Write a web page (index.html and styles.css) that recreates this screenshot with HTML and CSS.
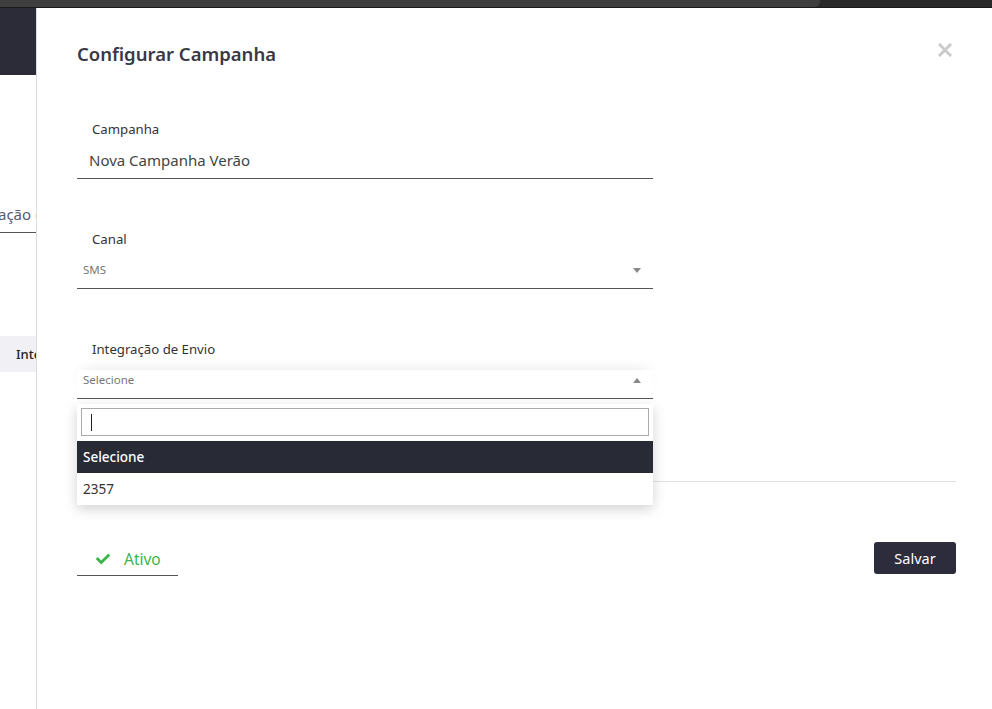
FILE: index.html
```html
<!DOCTYPE html>
<html lang="pt">
<head>
<meta charset="utf-8">
<title>Configurar Campanha</title>
<link rel="stylesheet" href="styles.css">
</head>
<body>
<div class="topbar"><div class="topbar-tab"></div></div>
<div class="main">
  <aside class="sidebar">
    <div class="sidebar-head"></div>
    <div class="sidebar-input">ação de envio</div>
    <div class="sidebar-item">Integrações</div>
  </aside>
  <section class="modal">
    <h1 class="modal-title">Configurar Campanha</h1>
    <svg class="close" viewBox="0 0 14 14" width="14" height="14"><path d="M2 2L12 12M12 2L2 12" stroke="#cbcbcb" stroke-width="3" stroke-linecap="square"/></svg>
    <div class="form">
      <div class="field">
        <div class="field-label">Campanha</div>
        <div class="field-value text-value">Nova Campanha Verão</div>
      </div>
      <div class="field">
        <div class="field-label">Canal</div>
        <div class="field-value select-value"><span>SMS</span><span class="caret down"></span></div>
      </div>
      <div class="field field-open">
        <div class="field-label">Integração de Envio</div>
        <div class="field-value select-value focused"><span>Selecione</span><span class="caret up"></span></div>
        <div class="dropdown">
          <div class="search"><span class="cursor"></span></div>
          <div class="option active">Selecione</div>
          <div class="option">2357</div>
        </div>
      </div>
    </div>
    <hr class="separator">
    <div class="footer">
      <div class="status">
        <svg class="check" viewBox="0 0 512 512" width="16" height="14"><path fill="#3bb54a" d="M173.9 439.4L7.5 273c-10-10-10-26.2 0-36.2l36.2-36.2c10-10 26.2-10 36.200 0L192 312.7 432.1 72.6c10-10 26.2-10 36.2 0l36.2 36.2c10 10 10 26.2 0 36.2L210.1 439.4c-10 10-26.2 10-36.2 0z"/></svg>
        <span>Ativo</span>
      </div>
      <button class="save">Salvar</button>
    </div>
  </section>
</div>
</body>
</html>
```

FILE: styles.css
```css
* { box-sizing: border-box; }
html, body { margin: 0; padding: 0; height: 100%; }
body {
  font-family: "Noto Sans", "Open Sans", sans-serif;
  color: #333;
  background: #fff;
  overflow: hidden;
}
.topbar {
  height: 8px;
  background: #2a2a2a;
  border-bottom: 1px solid #1b1b1b;
  position: relative;
}
.topbar-tab {
  width: 820px;
  height: 7px;
  background: #3e3e3e;
  border-bottom-right-radius: 6px;
}
.main {
  display: flex;
  height: calc(100% - 8px);
}
.sidebar {
  width: 36px;
  flex: none;
  overflow: hidden;
  background: #fff;
}
.sidebar-head {
  height: 67px;
  background: #2c2b38;
}
.sidebar-input {
  margin-top: 128px;
  margin-left: -2px;
  width: 50px;
  white-space: nowrap;
  font-size: 15px;
  line-height: 22px;
  color: #555a72;
  padding-bottom: 7px;
  border-bottom: 1px solid #555;
}
.sidebar-item {
  margin-top: 103px;
  height: 36px;
  background: #f0f0f5;
  padding-left: 16px;
  font-size: 13px;
  font-weight: 500;
  line-height: 36px;
  color: #222;
  white-space: nowrap;
}
.modal {
  flex: 1;
  position: relative;
  border-left: 1px solid #dcdcdc;
  padding: 33px 36px 0 40px;
}
.modal-title {
  margin: 0;
  font-size: 18.5px;
  line-height: 26px;
  font-weight: 600;
  color: #393945;
}
.close {
  position: absolute;
  top: 35px;
  right: 40px;
  display: block;
}
.form {
  width: 576px;
  margin-top: 52px;
  display: flex;
  flex-direction: column;
  gap: 50px;
}
.field { position: relative; }
.field-label {
  padding-left: 15px;
  font-size: 13.2px;
  line-height: 20px;
  color: #333;
}
.field-value {
  margin-top: 11px;
  height: 29px;
  line-height: 20px;
  padding-bottom: 8px;
  border-bottom: 1px solid #555;
}
.text-value {
  padding-left: 12px;
  font-size: 15px;
  color: #444;
}
.select-value {
  display: flex;
  justify-content: space-between;
  align-items: center;
  padding-left: 6px;
  padding-right: 12px;
  font-size: 11.5px;
  color: #777;
}
.select-value.focused { box-shadow: 0 -6px 14px -6px rgba(0,0,0,0.10); }
.select-value span:first-child { line-height: 20px; }
.caret {
  width: 0;
  height: 0;
  border-left: 4px solid transparent;
  border-right: 4px solid transparent;
}
.caret.down { border-top: 5px solid #888; }
.caret.up { border-bottom: 5px solid #888; }
.dropdown {
  position: absolute;
  left: 0;
  right: 0;
  top: 65px;
  background: #fff;
  padding-top: 4px;
  box-shadow: 0 4px 12px rgba(0,0,0,0.18);
  z-index: 5;
}
.search {
  margin: 0 4px 5px;
  height: 28px;
  border: 1px solid #aaa;
  padding: 5px 9px;
}
.cursor {
  display: block;
  width: 1px;
  height: 17px;
  background: #222;
}
.option {
  height: 32px;
  line-height: 32px;
  padding-left: 6px;
  font-size: 13.5px;
  color: #333;
}
.option.active {
  background: #282a35;
  color: #fff;
  font-weight: 500;
}
.separator {
  margin: 82px 0 0;
  border: 0;
  border-top: 1px solid #e2e2e2;
  height: 0;
}
.footer {
  margin-top: 60px;
  display: flex;
  justify-content: space-between;
  align-items: flex-start;
}
.status {
  width: 101px;
  height: 34px;
  display: flex;
  align-items: center;
  gap: 13px;
  padding-left: 18px;
  border-bottom: 1px solid #555;
  color: #3bb54a;
  font-size: 15.5px;
}
.check { display: block; }
.save {
  width: 82px;
  height: 32px;
  border: 0;
  border-radius: 3px;
  background: #2d2c3c;
  color: #fff;
  font-family: inherit;
  font-size: 14.5px;
  padding: 0;
}
```
